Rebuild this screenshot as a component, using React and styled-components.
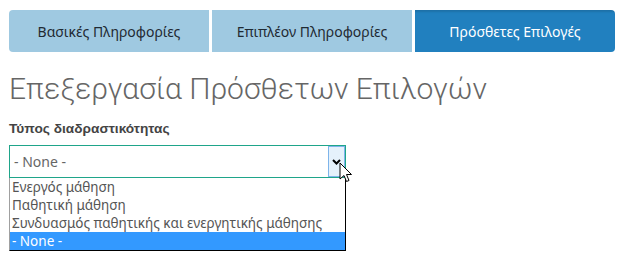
import React from "react";
import styled, { createGlobalStyle } from "styled-components";

const GlobalStyle = createGlobalStyle`
  html, body {
    margin: 0;
    padding: 0;
    background: #fff;
  }
  body {
    font-family: "Noto Sans", "Open Sans", sans-serif;
  }
`;

const tabs = [
  { id: 1, label: "Βασικές Πληροφορίες" },
  { id: 2, label: "Επιπλέον Πληροφορίες" },
  { id: 3, label: "Πρόσθετες Επιλογές", active: true },
];

const options = [
  "Ενεργός μάθηση",
  "Παθητική μάθηση",
  "Συνδυασμός παθητικής και ενεργητικής μάθησης",
  "- None -",
];

export default function App() {
  return (
    <Page>
      <GlobalStyle />
      <TabBar>
        {tabs.map(tab => (
          <Tab key={tab.id} active={tab.active}>
            {tab.label}
          </Tab>
        ))}
      </TabBar>
      <Heading>Επεξεργασία Πρόσθετων Επιλογών</Heading>
      <Label>Τύπος διαδραστικότητας</Label>
      <SelectWrap>
        <SelectBox>
          <SelectValue>- None -</SelectValue>
          <ArrowButton>
            <svg width="9" height="6" viewBox="0 0 9 6">
              <path d="M1 1 L4.5 4.5 L8 1" fill="none" stroke="#000" strokeWidth="2" />
            </svg>
          </ArrowButton>
        </SelectBox>
        <OptionList>
          {options.map(opt => (
            <Option key={opt} selected={opt === "- None -"}>
              {opt}
            </Option>
          ))}
        </OptionList>
        <Cursor width="14" height="22" viewBox="0 0 14 22">
          <path
            d="M1 1 L1 17 L5 13.5 L7.5 19.5 L10 18.5 L7.5 12.5 L12.5 12.5 Z"
            fill="#fff"
            stroke="#000"
            strokeWidth="1"
            strokeLinejoin="round"
          />
        </Cursor>
      </SelectWrap>
    </Page>
  );
}

const Page = styled.div`
  width: 626px;
  height: 260px;
  box-sizing: border-box;
  padding: 10px 9px 0;
  overflow: hidden;
`;

const TabBar = styled.nav`
  display: flex;
  gap: 3px;
  width: 606px;
  border-radius: 4px;
  overflow: hidden;
`;

const Tab = styled.div`
  flex: 1;
  height: 42px;
  display: flex;
  align-items: center;
  justify-content: center;
  font-size: 14px;
  background: ${props => (props.active ? "#2180bf" : "#9fc9e1")};
  color: ${props => (props.active ? "#fff" : "#1f2a33")};
  box-shadow: ${props =>
    props.active ? "inset 0 3px 2px -1px rgba(0,0,0,0.12)" : "none"};
`;

const Heading = styled.h1`
  margin: 19px 0 0;
  font-family: Roboto, "Noto Sans", sans-serif;
  font-weight: 300;
  font-size: 30px;
  line-height: 36px;
  color: #666;
`;

const Label = styled.div`
  margin-top: 14px;
  font-family: "Liberation Sans", Arial, sans-serif;
  font-weight: bold;
  font-size: 13.7px;
  line-height: 16px;
  color: #444;
`;

const SelectWrap = styled.div`
  position: relative;
  width: 337px;
  margin-top: 8px;
`;

const SelectBox = styled.div`
  height: 33px;
  box-sizing: border-box;
  border: 1px solid #1fa58a;
  display: flex;
  align-items: stretch;
`;

const SelectValue = styled.div`
  flex: 1;
  display: flex;
  align-items: center;
  padding-left: 4px;
  font-size: 14px;
  color: #666;
`;

const ArrowButton = styled.div`
  width: 17px;
  box-sizing: border-box;
  background: #e5f1fb;
  border: 1px solid #7eb4ea;
  display: flex;
  align-items: center;
  justify-content: center;
`;

const OptionList = styled.ul`
  list-style: none;
  margin: 0;
  padding: 0;
  box-sizing: border-box;
  width: 337px;
  border: 1px solid #000;
  border-left-color: #a0a0a0;
  border-top: none;
  background: #fff;
`;

const Option = styled.li`
  height: 18px;
  line-height: 18px;
  padding-left: 2px;
  font-size: 13.5px;
  background: ${props => (props.selected ? "#3399ff" : "transparent")};
  color: ${props => (props.selected ? "#fff" : "#555")};
`;

const Cursor = styled.svg`
  position: absolute;
  left: 330px;
  top: 17px;
`;
